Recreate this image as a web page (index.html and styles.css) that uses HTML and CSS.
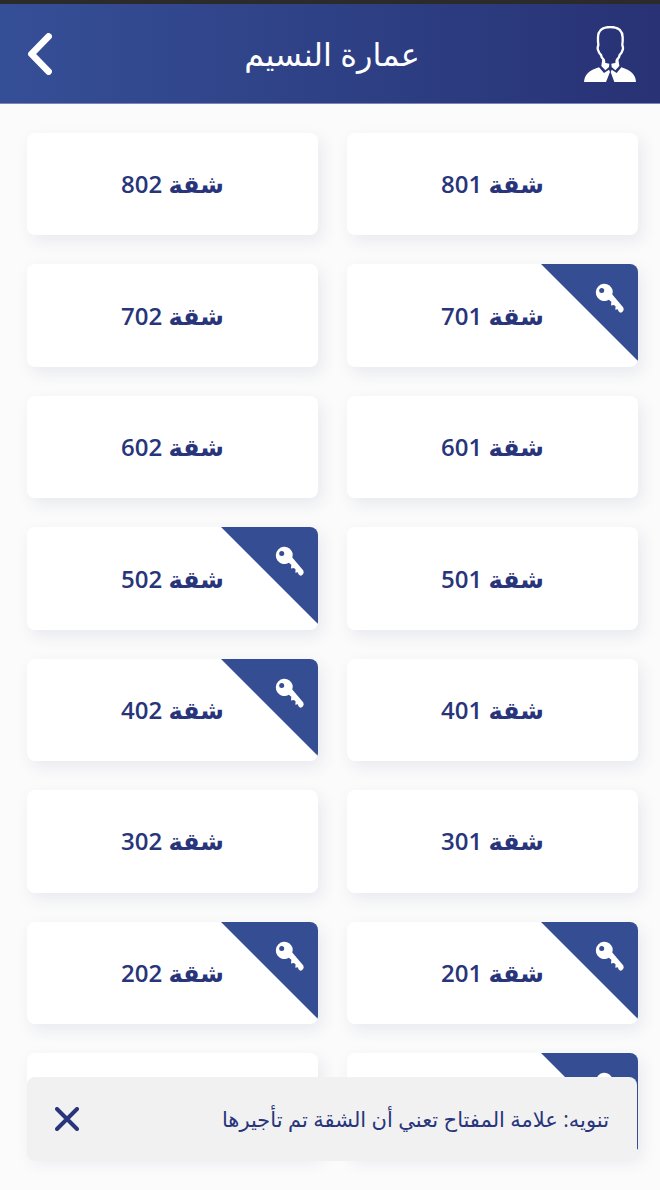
FILE: index.html
```html
<!DOCTYPE html>
<html lang="ar" dir="rtl">
<head>
<meta charset="utf-8">
<meta name="viewport" content="width=device-width, initial-scale=1">
<title>عمارة النسيم</title>
<link rel="stylesheet" href="styles.css">
</head>
<body>
<svg class="symbols" aria-hidden="true">
  <symbol id="key" viewBox="0 0 97 97">
    <path d="M0 0H97V97Z" fill="#354d92"/>
    <path d="M68.500 21.500A8.600 8.600 0 0 1 71.300 30.500L82.300 43.500Q83.300 45.500 82 47.300L80.500 48.600Q79 49.200 77.500 47.300L76.800 45.200 74.300 45.800 74.600 42.600 73 41 70 41.400 70.300 37.800 67.800 35.800A8.600 8.600 0 1 1 68.500 21.500Z" fill="#fff"/>
    <circle cx="60.700" cy="26.500" r="2.500" fill="#354d92"/>
  </symbol>
</svg>
<header class="topbar">
  <button class="icon-button" type="button" aria-label="الحساب">
    <svg class="avatar" viewBox="0 0 156 168" aria-hidden="true">
      <path d="M61 108L59 101Q52 95 51 87Q44 81 43 74Q39 67 43 58Q43 53 42 46V34C42 12 57 3 79 3S116 12 116 34V46Q115 53 115 58Q119 67 115 74Q114 81 107 87Q106 95 99 101L97 108" fill="none" stroke="#fff" stroke-width="7" stroke-linejoin="round"/>
      <path d="M55 98L65 111 76 113 75 123 64 133 52 120ZM103 98L93 111 82 113 83 123 94 133 106 120Z" fill="#fff"/>
      <path d="M0 168Q1 137 45 124L60 141 75 131 78 138 66 168ZM156 168Q155 137 112 124L98 141 83 131 80 138 91 168Z" fill="#fff"/>
    </svg>
  </button>
  <h1 class="title">عمارة النسيم</h1>
  <button class="icon-button" type="button" aria-label="رجوع">
    <svg class="chevron" viewBox="0 0 24 42" aria-hidden="true"><path d="M20.500 3.500L3.500 21L20.500 38.500" fill="none" stroke="#fff" stroke-width="6.800" stroke-linecap="round" stroke-linejoin="round"/></svg>
  </button>
</header>
<main class="units">
  <button class="unit" type="button">شقة 801</button>
  <button class="unit" type="button">شقة 802</button>
  <button class="unit" type="button">شقة 701<svg class="rented" aria-hidden="true"><use href="#key"/></svg></button>
  <button class="unit" type="button">شقة 702</button>
  <button class="unit" type="button">شقة 601</button>
  <button class="unit" type="button">شقة 602</button>
  <button class="unit" type="button">شقة 501</button>
  <button class="unit" type="button">شقة 502<svg class="rented" aria-hidden="true"><use href="#key"/></svg></button>
  <button class="unit" type="button">شقة 401</button>
  <button class="unit" type="button">شقة 402<svg class="rented" aria-hidden="true"><use href="#key"/></svg></button>
  <button class="unit" type="button">شقة 301</button>
  <button class="unit" type="button">شقة 302</button>
  <button class="unit" type="button">شقة 201<svg class="rented" aria-hidden="true"><use href="#key"/></svg></button>
  <button class="unit" type="button">شقة 202<svg class="rented" aria-hidden="true"><use href="#key"/></svg></button>
  <button class="unit" type="button" aria-label="شقة 101"><svg class="rented" aria-hidden="true"><use href="#key"/></svg></button>
  <button class="unit" type="button" aria-label="شقة 102"></button>
</main>
<aside class="notice">
  <p class="notice-text">تنويه: علامة المفتاح تعني أن الشقة تم تأجيرها</p>
  <button class="icon-button" type="button" aria-label="إغلاق">
    <svg class="close" viewBox="0 0 24 24" aria-hidden="true"><path d="M2 2L22 22M22 2L2 22" fill="none" stroke="#28357a" stroke-width="4" stroke-linecap="round"/></svg>
  </button>
</aside>
</body>
</html>
```

FILE: styles.css
```css
* {
  box-sizing: border-box;
}

body {
  margin: 0;
  background: #fbfbfb;
  color: #28357a;
  font-family: "Open Sans", "DejaVu Sans", sans-serif;
}

.symbols {
  position: absolute;
  width: 0;
  height: 0;
}

.topbar {
  display: grid;
  grid-template-columns: 52px 1fr 52px;
  align-items: center;
  height: 104px;
  padding: 5px 24px 0 28px;
  border-bottom: 1px solid #8086b3;
  background:
    linear-gradient(#2b2b2b, #2b2b2b) top / 100% 4px no-repeat,
    linear-gradient(to right, #354f96, #283275);
}

.title {
  margin: 0;
  color: #fff;
  font-size: 32px;
  line-height: 40px;
  font-weight: 400;
  text-align: center;
}

.icon-button {
  display: flex;
  padding: 0;
  border: 0;
  background: none;
  cursor: pointer;
}

.topbar .icon-button {
  justify-content: flex-end;
}

.avatar {
  width: 52px;
  height: 56px;
}

.chevron {
  width: 24px;
  height: 42px;
}

.units {
  display: grid;
  grid-template-columns: 1fr 1fr;
  gap: 29px;
  padding: 29px 22px 34px 27px;
}

.unit {
  position: relative;
  aspect-ratio: 71 / 25;
  padding: 0;
  border: 0;
  border-radius: 8px;
  overflow: hidden;
  background: #fff;
  box-shadow: 4px 6px 16px rgba(40, 50, 117, 0.09);
  color: inherit;
  font-family: inherit;
  font-size: 24px;
  line-height: 36px;
  font-weight: 600;
  cursor: pointer;
}

.rented {
  position: absolute;
  top: 0;
  right: 0;
  width: 97px;
  height: 97px;
}

.notice {
  position: fixed;
  right: 23px;
  bottom: 29px;
  left: 27px;
  display: flex;
  align-items: center;
  justify-content: space-between;
  padding: 24px 28px;
  border-radius: 8px;
  background: #f1f1f1;
}

.notice-text {
  margin: 0;
  font-size: 21px;
  line-height: 36px;
}

.close {
  width: 24px;
  height: 24px;
}
```
